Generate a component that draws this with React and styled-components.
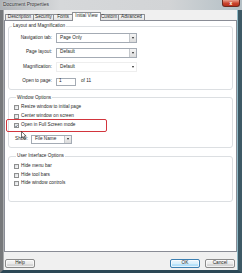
import React from 'react';
import styled, { createGlobalStyle, css } from 'styled-components';

const GlobalStyle = createGlobalStyle`
  html, body {
    margin: 0;
    padding: 0;
    background: #2b4654;
  }
  body {
    font-family: "Liberation Sans", "DejaVu Sans", sans-serif;
  }
  * {
    box-sizing: border-box;
  }
`;

const Window = styled.div`
  width: 242px;
  height: 273px;
  display: flex;
  flex-direction: column;
  overflow: hidden;
  font-size: 4.7px;
  line-height: 1;
  color: #262626;
`;

const TitleBar = styled.div`
  height: 10px;
  flex: none;
  display: flex;
  justify-content: space-between;
  padding: 0 2px 0 3px;
  background: linear-gradient(to right, #aeb2b6 0%, #d6d8da 25%, #d2d4d6 70%, #b3bfc5 100%);
`;

const Title = styled.span`
  align-self: center;
  font-size: 4.9px;
  color: #303030;
  text-shadow: 0 0 2px #f4f4f4;
`;

const CloseButton = styled.div`
  width: 18px;
  height: 7px;
  border-radius: 0 0 3px 3px;
  border: 1px solid #6b2a20;
  border-top: none;
  background: linear-gradient(#e8a08f, #c9442e 55%, #b9301c);
  display: flex;
  align-items: center;
  justify-content: center;
  color: #fff;
  font-size: 5px;
  font-weight: bold;
`;

const Main = styled.div`
  flex: 1;
  display: flex;
  flex-direction: column;
  padding: 2px 1px 0;
  background: #f0f0f0;
  border-left: 3px solid #77797b;
  border-right: 4px solid #3d5965;
  border-bottom: 3px solid #2c4856;
  box-shadow: inset 1px 0 0 #a9abad, inset -1px 0 0 #8fb9c6;
`;

const TabStrip = styled.div`
  height: 9px;
  margin: 0 0 -1px 1px;
  display: flex;
  align-items: flex-start;
  position: relative;
  z-index: 1;
`;

const Tab = styled.div`
  width: ${({ $w }) => $w}px;
  height: 6px;
  margin-top: 2px;
  border: 1px solid #8d8f93;
  border-bottom: none;
  border-radius: 1px 1px 0 0;
  margin-left: -1px;
  background: linear-gradient(#f6f6f6, #e3e3e3);
  display: flex;
  align-items: center;
  justify-content: center;
  white-space: nowrap;

  &:first-child {
    margin-left: 0;
  }

  ${({ $active }) =>
    $active &&
    css`
      height: 9px;
      margin-top: 0;
      margin-right: -1px;
      background: #fff;
      position: relative;
      z-index: 1;
      padding-bottom: 1px;
    `}
`;

const Panel = styled.div`
  height: 232px;
  flex: none;
  background: #fff;
  border: 1px solid #898c95;
  padding: 0 3px;
  position: relative;
`;

const Group = styled.fieldset`
  margin: ${({ $first }) => ($first ? '2px' : '5px')} 0 0;
  padding: ${({ $pad }) => $pad};
  border: 1px solid #dcdfe2;
  border-radius: 3px;
  min-width: 0;
`;

const Legend = styled.legend`
  padding: 0 1px;
  margin-left: 2px;
  line-height: 6px;
  height: 6px;
`;

const FormRows = styled.div`
  display: flex;
  flex-direction: column;
  gap: 4.5px;
`;

const FormRow = styled.div`
  height: 10px;
  display: grid;
  grid-template-columns: 42px auto;
  column-gap: 4px;
  align-items: center;
`;

const FieldLabel = styled.span`
  text-align: right;
  white-space: nowrap;
`;

const Combo = styled.div`
  width: ${({ $w }) => $w}px;
  height: ${({ $h }) => $h || 10}px;
  border: 1px solid ${({ $flat }) => ($flat ? '#eeeeee' : '#a4abb4')};
  background: #fff;
  display: flex;
  align-items: center;
  padding-left: 3px;
`;

const ComboText = styled.span`
  flex: 1;
  white-space: nowrap;
`;

const ComboArrow = styled.span`
  width: 7px;
  height: 100%;
  display: flex;
  align-items: center;
  justify-content: center;
  ${({ $flat }) =>
    !$flat &&
    css`
      background: linear-gradient(#f4f4f4, #dcdcdc);
      border-left: 1px solid #c4c8cc;
    `}

  &::after {
    content: '';
    border-left: 1.5px solid transparent;
    border-right: 1.5px solid transparent;
    border-top: 2px solid #222;
  }
`;

const PageField = styled.div`
  display: flex;
  align-items: center;
  gap: 5px;
`;

const PageInput = styled.div`
  width: 20px;
  height: 8px;
  border: 1px solid #a4abb4;
  display: flex;
  align-items: center;
  padding-left: 2px;
`;

const CheckRow = styled.div`
  height: ${({ $h }) => $h}px;
  display: flex;
  align-items: center;
  gap: 2px;
  white-space: nowrap;
`;

const Box = styled.span`
  width: 5px;
  height: 5px;
  flex: none;
  border: 1px solid #8e8f8f;
  background: linear-gradient(135deg, #d9dcdf, #fbfbfb);
  display: flex;
  align-items: center;
  justify-content: center;
`;

const ShowRow = styled.div`
  height: 9px;
  margin-top: 4.5px;
  padding-left: 1px;
  display: flex;
  align-items: center;
  gap: 5px;
`;

const ShowLabel = styled.span`
  width: 11px;
`;

const Highlight = styled.div`
  position: absolute;
  left: 1px;
  top: 98px;
  width: 101px;
  height: 13px;
  border: 1.5px solid #d2353d;
  border-radius: 2px;
  pointer-events: none;
`;

const Pointer = styled.svg`
  position: absolute;
  left: 16px;
  top: 110px;
`;

const Footer = styled.div`
  height: 18px;
  display: flex;
  align-items: flex-start;
  padding: 7px 2px 0 1px;
  gap: 5px;
`;

const Spacer = styled.div`
  flex: 1;
`;

const Button = styled.div`
  width: 30px;
  height: 9px;
  border-radius: 2px;
  border: 1px solid ${({ $primary }) => ($primary ? '#3c7fb1' : '#8a8a8a')};
  background: ${({ $primary }) =>
    $primary
      ? 'linear-gradient(#eaf6fd 0%, #d9f0fc 50%, #bee6fd 51%, #a7d9f5 100%)'
      : 'linear-gradient(#f3f3f3 0%, #ebebeb 50%, #dddddd 51%, #cfcfcf 100%)'};
  box-shadow: inset 0 0 0 1px rgba(255, 255, 255, 0.7);
  display: flex;
  align-items: center;
  justify-content: center;
`;

const Check = () => (
  <svg width="4" height="4" viewBox="0 0 4 4">
    <path d="M0.4 2 L1.5 3.2 L3.6 0.6" fill="none" stroke="#2a3a55" strokeWidth="0.8" />
  </svg>
);

const CheckItem = ({ checked, h, children }) => (
  <CheckRow $h={h}>
    <Box>{checked && <Check />}</Box>
    <span>{children}</span>
  </CheckRow>
);

const Select = ({ w, h, flat, children }) => (
  <Combo $w={w} $h={h} $flat={flat}>
    <ComboText>{children}</ComboText>
    <ComboArrow $flat={flat} />
  </Combo>
);

const tabs = [
  { label: 'Description', w: 29 },
  { label: 'Security', w: 21 },
  { label: 'Fonts', w: 20 },
  { label: 'Initial View', w: 29, active: true },
  { label: 'Custom', w: 20 },
  { label: 'Advanced', w: 27 },
];

export default function App() {
  return (
    <>
      <GlobalStyle />
      <Window>
        <TitleBar>
          <Title>Document Properties</Title>
          <CloseButton>x</CloseButton>
        </TitleBar>
        <Main>
          <TabStrip>
            {tabs.map((t) => (
              <Tab key={t.label} $w={t.w} $active={t.active}>
                {t.label}
              </Tab>
            ))}
          </TabStrip>
          <Panel>
            <Group $first $pad="4px 0 2px 1px">
              <Legend>Layout and Magnification</Legend>
              <FormRows>
                <FormRow>
                  <FieldLabel>Navigation tab:</FieldLabel>
                  <Select w={81}>Page Only</Select>
                </FormRow>
                <FormRow>
                  <FieldLabel>Page layout:</FieldLabel>
                  <Select w={81}>Default</Select>
                </FormRow>
                <FormRow>
                  <FieldLabel>Magnification:</FieldLabel>
                  <Select w={81} flat>
                    Default
                  </Select>
                </FormRow>
                <FormRow>
                  <FieldLabel>Open to page:</FieldLabel>
                  <PageField>
                    <PageInput>1</PageInput>
                    <span>of 11</span>
                  </PageField>
                </FormRow>
              </FormRows>
            </Group>

            <Group $pad="2.5px 0 3.5px 5px">
              <Legend>Window Options</Legend>
              <CheckItem h={9}>Resize window to initial page</CheckItem>
              <CheckItem h={9}>Center window on screen</CheckItem>
              <CheckItem h={9} checked>
                Open in Full Screen mode
              </CheckItem>
              <ShowRow>
                <ShowLabel>Show:</ShowLabel>
                <Select w={41} h={9}>
                  File Name
                </Select>
              </ShowRow>
            </Group>

            <Group $pad="3.25px 0 13px 5px">
              <Legend>User Interface Options</Legend>
              <CheckItem h={8.5}>Hide menu bar</CheckItem>
              <CheckItem h={8.5}>Hide tool bars</CheckItem>
              <CheckItem h={8.5}>Hide window controls</CheckItem>
            </Group>

            <Highlight />
            <Pointer width="6" height="9" viewBox="0 0 6 9">
              <path
                d="M0.5 0.5 L0.5 7 L2 5.6 L3.1 8.2 L4.2 7.7 L3.1 5.1 L5.2 5.1 Z"
                fill="#fff"
                stroke="#111"
                strokeWidth="0.6"
                strokeLinejoin="round"
              />
            </Pointer>
          </Panel>
          <Footer>
            <Button>Help</Button>
            <Spacer />
            <Button $primary>OK</Button>
            <Button>Cancel</Button>
          </Footer>
        </Main>
      </Window>
    </>
  );
}
